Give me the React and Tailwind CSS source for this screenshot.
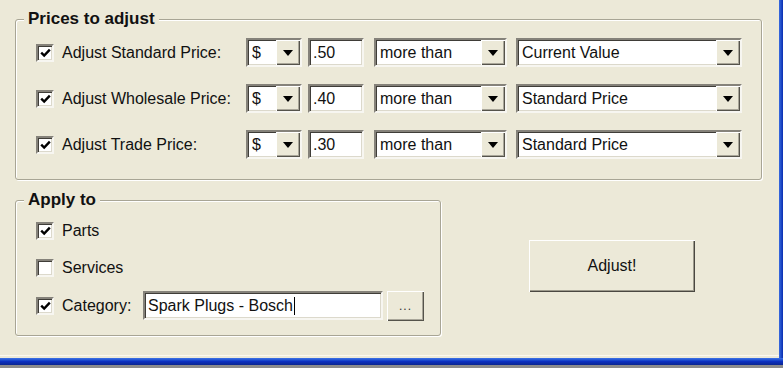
import React from "react";

const sunken =
  "bg-white border-2 border-t-[#85827a] border-l-[#85827a] border-b-[#f7f6f1] border-r-[#f7f6f1] shadow-[inset_1px_1px_0_#3f3d38,inset_-1px_-1px_0_#dcd9cc]";

function Check({ checked }) {
  return (
    <div
      className={
        "w-[18px] h-[18px] shrink-0 flex items-center justify-center " + sunken
      }
    >
      {checked && (
        <svg width="11" height="10" viewBox="0 0 11 10">
          <path d="M1.2 4.6 L4.2 7.6 L9.8 1.6" stroke="#000" strokeWidth="2.4" fill="none" />
        </svg>
      )}
    </div>
  );
}

function Arrow() {
  return (
    <svg width="10" height="6" viewBox="0 0 10 6">
      <path d="M0 0 H10 L5 6 Z" fill="#000" />
    </svg>
  );
}

function Combo({ className, value }) {
  return (
    <div className={"flex h-[29px] shrink-0 " + sunken + " " + className}>
      <div className="flex-1 flex items-center pl-[4px] leading-none">{value}</div>
      <div className="w-[24px] bg-[#ECE9D8] flex items-center justify-center shadow-[inset_1px_1px_0_#fff,inset_-1px_-1px_0_#55534b,inset_-2px_-2px_0_#a9a699]">
        <Arrow />
      </div>
    </div>
  );
}

function TextBox({ className, children }) {
  return (
    <div className={"flex items-center h-[29px] pl-[3px] shrink-0 " + sunken + " " + className}>
      {children}
    </div>
  );
}

const fieldset =
  "ml-[15px] rounded-[3px] border border-[#a8a595] shadow-[inset_1px_1px_0_#fff,1px_1px_0_#fff]";
const legend = "ml-[8px] px-[4px] bg-[#ECE9D8] font-bold text-[17px] leading-[20px]";

function PriceRow({ label, amount, base }) {
  return (
    <div className="flex items-center h-[29px]">
      <Check checked />
      <span className="ml-[8px] w-[184px] shrink-0">{label}</span>
      <Combo className="w-[56px]" value="$" />
      <TextBox className="ml-[6px] w-[56px]">{amount}</TextBox>
      <Combo className="ml-[10px] w-[133px]" value="more than" />
      <Combo className="ml-[9px] w-[226px]" value={base} />
    </div>
  );
}

export default function App() {
  return (
    <div className="w-[783px] h-[368px] overflow-hidden bg-[#8c8c8c] text-[16px] text-[#111] font-['Liberation_Sans',Arial,sans-serif]">
      <div className="flex h-[358px]">
        <div className="flex-1 flex flex-col bg-[#ECE9D8]">
          <fieldset className={fieldset + " mt-[9px] w-[747px]"}>
            <legend className={legend}>Prices to adjust</legend>
            <div className="flex flex-col gap-[17px] pl-[20px] mt-[9px] pb-[20px]">
              <PriceRow label="Adjust Standard Price:" amount=".50" base="Current Value" />
              <PriceRow label="Adjust Wholesale Price:" amount=".40" base="Standard Price" />
              <PriceRow label="Adjust Trade Price:" amount=".30" base="Standard Price" />
            </div>
          </fieldset>
          <div className="flex items-start mt-[10px]">
            <fieldset className={fieldset + " w-[426px]"}>
              <legend className={legend}>Apply to</legend>
              <div className="flex flex-col gap-[9px] pl-[20px] mt-[7px] pb-[15px]">
                <div className="flex items-center h-[28px]">
                  <Check checked />
                  <span className="ml-[8px]">Parts</span>
                </div>
                <div className="flex items-center h-[28px]">
                  <Check />
                  <span className="ml-[8px]">Services</span>
                </div>
                <div className="flex items-center h-[29px]">
                  <Check checked />
                  <span className="ml-[8px] w-[81px] shrink-0">Category:</span>
                  <TextBox className="w-[240px]">
                    <span>Spark Plugs - Bosch</span>
                    <span className="w-px h-[18px] bg-black ml-[1px]" />
                  </TextBox>
                  <button className="ml-[4px] w-[37px] h-[30px] bg-[#ECE9D8] flex items-center justify-center text-[12px] tracking-[1px] text-[#333] shadow-[inset_1px_1px_0_#fff,inset_-1px_-1px_0_#55534b,inset_-2px_-2px_0_#a9a699]">
                    ...
                  </button>
                </div>
              </div>
            </fieldset>
            <button className="ml-[88px] mt-[50px] w-[166px] h-[52px] bg-[#ECE9D8] flex items-center justify-center shadow-[inset_1px_1px_0_#fff,inset_-1px_-1px_0_#4a4841,inset_-2px_-2px_0_#9d9a8c]">
              Adjust!
            </button>
          </div>
          <div className="mt-auto mb-[2px] h-px bg-[#fbf8ef]" />
        </div>
        <div className="w-[4px] bg-gradient-to-r from-[#3a6be0] to-[#0a2bb0]" />
      </div>
      <div className="h-[7px] bg-gradient-to-b from-[#3f73e6] via-[#0c30c0] to-[#0a2590]" />
    </div>
  );
}
